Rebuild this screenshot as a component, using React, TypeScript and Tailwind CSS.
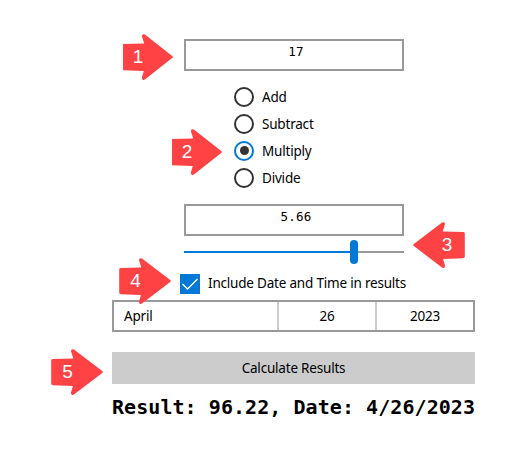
import React from "react";

const ui = "font-['Noto_Sans',sans-serif] text-[13.5px] leading-5 tracking-[-0.2px] whitespace-nowrap";
const mono = "font-['DejaVu_Sans_Mono',monospace]";

function Arrow({ n, place, flip = false, cut = false }: { n: number; place: string; flip?: boolean; cut?: boolean }) {
  const body = "M1.5 10.1 L22.3 9.4 L20.1 2.4 Q19.7 -.9 23 .6 L51.2 22 Q52.6 23 51.2 24 L23 45.5 Q19.8 47.2 20 43.4 L21.9 37 L2 36.2 Q.2 36 .2 34.5 L.2 11.8 Q.2 10.2 1.5 10.1Z";
  const square = "M0 10 L21.2 9.4 L19 2.4 Q18.6 -.9 21.9 .6 L49.2 22 Q50.6 23 49.2 24 L21.9 45.5 Q18.7 47.2 18.9 43.4 L20.8 37 L0 36.2Z";
  return (
    <div className={`absolute h-[46px] ${cut ? "w-[50px]" : "w-[52px]"} ${place}`}>
      <svg className={`block h-full w-full ${flip ? "-scale-x-100" : ""}`} viewBox={cut ? "0 0 50 46" : "0 0 52 46"}>
        <path d={cut ? square : body} fill="#ff4345" />
      </svg>
      <span className={`absolute top-[13px] w-5 text-center font-['Liberation_Sans',sans-serif] text-[19px] leading-5 text-white ${flip ? "right-[8px]" : cut ? "left-[5px]" : "left-[6.5px]"}`}>{n}</span>
    </div>
  );
}

function Field({ value }: { value: string }) {
  return (
    <div className={`h-8 w-[220px] border-2 border-[#999] pl-1 pt-px text-center text-[12.5px] leading-5 tracking-[0.17px] text-black ${mono}`}>{value}</div>
  );
}

function Radio({ label, selected = false }: { label: string; selected?: boolean }) {
  return (
    <label className="flex h-[27px] items-center gap-2">
      <span className={`flex size-5 items-center justify-center rounded-full border-2 ${selected ? "border-[#0078d7]" : "border-[#333]"}`}>
        {selected && <span className="size-[9px] rounded-full bg-[#333]" />}
      </span>
      <span className={ui}>{label}</span>
    </label>
  );
}

export default function App() {
  return (
    <main className="relative h-[455px] w-[526px] overflow-hidden bg-white pl-[112px] pt-[39px] text-black">
      <div className="w-[363px]">
        <div className="ml-[72px] w-[220px]">
          <Field value="17" />
          <div className="ml-[50px] mt-3 mb-[13px]">
            <Radio label="Add" />
            <Radio label="Subtract" />
            <Radio label="Multiply" selected />
            <Radio label="Divide" />
          </div>
          <Field value="5.66" />
          <div className="mt-1 flex h-6 items-center">
            <div className="h-0.5 w-[166px] bg-[#0078d7]" />
            <div className="h-6 w-2 rounded-full bg-[#0078d7]" />
            <div className="h-0.5 flex-1 bg-[#999]" />
          </div>
        </div>
        <label className="ml-[68px] mt-2.5 flex h-5 items-center gap-2">
          <span className="size-5 bg-[#0078d7]">
            <svg viewBox="0 0 20 20" className="size-5"><path d="M2.5 10 L7.5 15 L17.5 5" fill="none" stroke="white" strokeWidth="1.3" /></svg>
          </span>
          <span className={`pb-0.5 ${ui}`}>Include Date and Time in results</span>
        </label>
        <div className={`mt-1.5 flex h-8 items-center border-2 border-[#999] ${ui}`}>
          <div className="flex h-full w-[165px] items-center border-r-2 border-[#ccc] pl-2.5">April</div>
          <div className="flex h-full w-[98px] items-center justify-center border-r-2 border-[#ccc]">26</div>
          <div className="flex-1 text-center">2023</div>
        </div>
        <button className={`mt-5 block h-8 w-full bg-[#ccc] ${ui}`}>Calculate Results</button>
        <div className={`mt-[9px] text-[20px] font-bold leading-7 tracking-[0.06px] whitespace-nowrap ${mono}`}>Result: 96.22, Date: 4/26/2023</div>
      </div>
      <Arrow n={1} place="left-[123px] top-[34px]" cut />
      <Arrow n={2} place="left-[172px] top-[129px]" cut />
      <Arrow n={3} place="left-[413px] top-[222px]" flip />
      <Arrow n={4} place="left-[119px] top-[258px]" />
      <Arrow n={5} place="left-[51px] top-[349px]" />
    </main>
  );
}
